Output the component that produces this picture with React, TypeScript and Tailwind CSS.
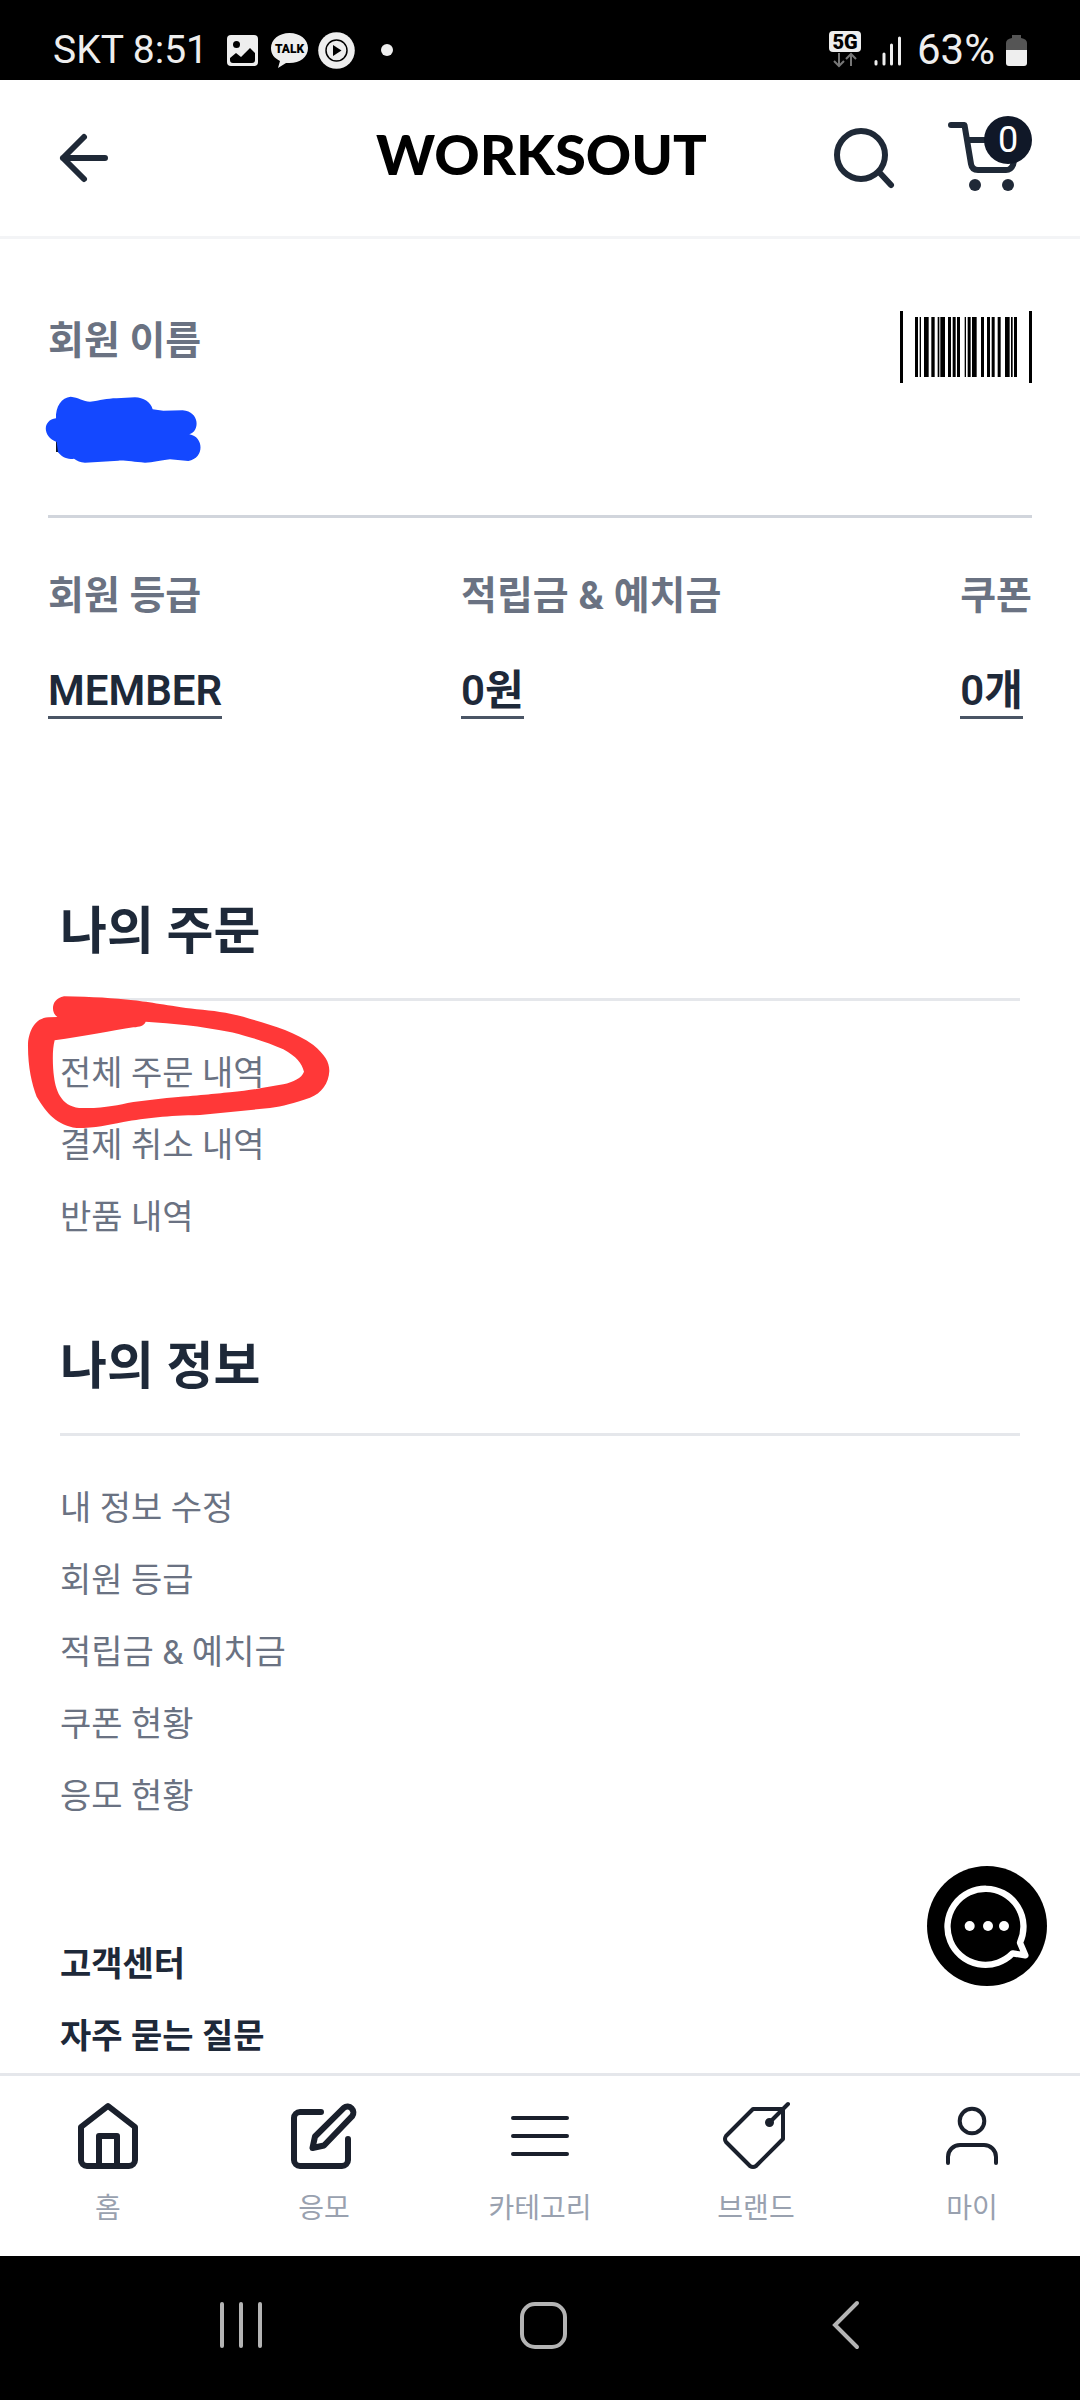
import type { ReactNode } from "react";

const bars: [number, number][] = [
  [165, 9], [179, 4], [192, 14], [214, 10], [233, 5], [241, 14], [264, 9], [278, 9], [291, 9], [314, 4],
  [323, 9], [336, 14], [363, 9], [381, 9], [395, 9], [413, 9], [435, 14], [453, 5], [462, 9],
];

function StatusBar() {
  return (
    <div className="flex h-20 items-center justify-between bg-black px-[53px] pt-5 text-[#eeeeee]">
      <div className="flex items-center">
        <span className="w-[174px] text-[39px] leading-[60px]">SKT 8:51</span>
        <svg className="h-[38px] w-[170px]" viewBox="227 31 170 38" aria-hidden="true">
          <rect x="227" y="35" width="31" height="31" rx="4" fill="#eeeeee" />
          <circle cx="236.500" cy="44.500" r="3.500" fill="#000" />
          <path d="M230 60V58L236 53L241 57L250 48L255 53V60Q255 63 252 63H233Q230 63 230 60Z" fill="#000" />
          <path d="M289.500 33C300 33 308 39.500 308 48C308 57 300 63 289.500 63L286 63L278 68L280 61C274 58 271 54 271 48C271 39.500 279 33 289.500 33Z" fill="#eeeeee" />
          <text x="289.500" y="53" textAnchor="middle" fontFamily="Roboto, sans-serif" fontSize="12" fontWeight="900" fill="#000">TALK</text>
          <circle cx="336.500" cy="50.500" r="18.300" fill="#eeeeee" />
          <circle cx="336.500" cy="50.500" r="10.500" fill="none" stroke="#000" strokeWidth="1.500" />
          <path d="M333 45L341.500 50.500L333 56Z" fill="#000" />
          <circle cx="387" cy="50" r="6" fill="#eeeeee" />
        </svg>
      </div>
      <div className="flex items-center">
        <svg className="h-10 w-[76px]" viewBox="829 29 76 40" aria-hidden="true">
          <rect x="829" y="30" width="32" height="21" rx="4" fill="#eeeeee" />
          <text x="845" y="48" textAnchor="middle" fontFamily="Roboto, sans-serif" fontSize="20" fontWeight="900" fill="#000">5G</text>
          <path d="M839 52V65M834 60L839 65L844 60M851 65V53M846 58L851 53L856 58" fill="none" stroke="#777" strokeWidth="2" />
          <path d="M876 60.500V63M884 53V63M891.500 44V63M899.500 37V63" stroke="#eeeeee" strokeWidth="3" strokeLinecap="round" />
        </svg>
        <span className="ml-3 w-[86px] text-[42px] leading-[60px]">63%</span>
        <svg className="ml-[3px] h-10 w-[21px]" viewBox="1006 29 21 40" aria-hidden="true">
          <path d="M1012 37V34H1021V37Q1027 38 1027 42V50H1006V42Q1006 38 1012 37Z" fill="#555" />
          <path d="M1006 49H1027V62Q1027 65 1024 65H1009Q1006 65 1006 62Z" fill="#eeeeee" />
        </svg>
      </div>
    </div>
  );
}

function Header() {
  return (
    <header className="grid grid-cols-3 items-center border-b-[3px] border-gray-100 px-12 py-9">
      <button type="button" aria-label="뒤로" className="w-[72px]">
        <svg className="h-[72px] w-[72px]" viewBox="0 0 72 72" fill="none" stroke="#1f2937" strokeWidth="6" strokeLinecap="round" strokeLinejoin="round">
          <path d="M57 36H15M36 15L15 36L36 57" />
        </svg>
      </button>
      <a href="#home" className="pb-2 text-center font-['Lato'] text-[56px] leading-[72px] font-black text-black">WORKSOUT</a>
      <div className="flex items-center justify-end gap-9">
        <button type="button" aria-label="검색">
          <svg className="h-[84px] w-[84px]" viewBox="822 116 84 84" fill="none" stroke="#1f2937" strokeWidth="6" strokeLinecap="round">
            <circle cx="861" cy="155" r="24" />
            <path d="M879 172L891 185" />
          </svg>
        </button>
        <button type="button" aria-label="장바구니" className="relative">
          <svg className="h-[84px] w-[90px]" viewBox="942 116 90 84" fill="none" stroke="#1f2937" strokeWidth="6" strokeLinecap="round" strokeLinejoin="round">
            <path d="M951 125H964.500L971 164Q972 170 978 170H1006Q1011 170 1013 165L1019 140H968" />
            <circle cx="975" cy="185" r="6" fill="#1f2937" stroke="none" />
            <circle cx="1008" cy="185" r="6" fill="#1f2937" stroke="none" />
          </svg>
          <span className="absolute top-0 right-0 flex h-12 w-12 items-center justify-center rounded-full bg-gray-900 text-[36px] leading-none text-white">0</span>
        </button>
      </div>
    </header>
  );
}

function Stat({ label, value }: { label: string; value: string }) {
  return (
    <div className="flex flex-col items-start gap-10">
      <dt className="text-[39px] leading-[60px] font-bold text-gray-500">{label}</dt>
      <dd className="flex">
        <a href="#detail" className="border-b-[3px] border-gray-600 text-[42px] leading-[50px] font-semibold text-gray-800">
          {value}
        </a>
      </dd>
    </div>
  );
}

function Profile() {
  return (
    <section className="px-12 pt-[72px]">
      <div className="flex items-start justify-between border-b-[3px] border-gray-300 pb-12">
        <div className="flex flex-col gap-6">
          <h2 className="text-[39px] leading-[60px] font-bold text-gray-500">회원 이름</h2>
          <svg className="h-[72px] w-[156px]" viewBox="144 315 468 216" overflow="visible" role="img" aria-label="가려진 이름">
            <rect x="168" y="450" width="8" height="36" fill="#111827" />
            <path
              d="M168 385C166 350 185 322 212 320C235 322 250 334 270 335C300 332 320 325 350 325L405 322C430 323 452 335 458 358L490 362L548 361C600 365 600 425 568 433C612 440 615 505 565 513L510 508C480 511 460 518 435 518C400 516 380 511 355 512L255 518C240 517 232 512 222 506C200 510 185 500 174 487L170 456C127 440 127 390 168 385Z"
              fill="#1448ff"
            />
          </svg>
        </div>
        <button type="button" aria-label="회원 바코드" className="border-x-[3px] border-black">
          <svg className="h-[72px] w-[126px]" viewBox="129 63 378 216" fill="#000">
            {bars.map(([x, w]) => (
              <rect key={x} x={x} y="81" width={w} height="180" />
            ))}
          </svg>
        </button>
      </div>
      <dl className="flex justify-between pt-12">
        <Stat label="회원 등급" value="MEMBER" />
        <Stat label="적립금 & 예치금" value="0원" />
        <Stat label="쿠폰" value="0개" />
      </dl>
    </section>
  );
}

function MenuSection({ title, items, children }: { title: string; items: string[]; children?: ReactNode }) {
  return (
    <section>
      <h2 className="border-b-[3px] border-gray-200 pb-[30px] text-[51px] leading-[72px] font-bold text-gray-800">{title}</h2>
      <ul className="relative mt-9 text-[34px] leading-[72px] text-gray-500">
        {items.map((item) => (
          <li key={item}>
            <a href="#menu">{item}</a>
          </li>
        ))}
        {children}
      </ul>
    </section>
  );
}

function RedMarker() {
  return (
    <li className="pointer-events-none absolute -top-11 -left-[37px]" aria-hidden="true">
      <svg className="h-[137px] w-[310px]" viewBox="69 369 930 411">
        <path
          fillRule="evenodd"
          fill="#ff3838"
          d="M192 379C280 380 340 385 400 391C450 396 500 407 590 418C640 422 680 428 730 440C800 462 880 480 940 525C975 555 988 575 988 603C986 640 965 670 930 683C880 700 850 708 810 714L600 735C500 737 440 744 370 756C320 766 290 774 230 774C170 765 140 730 110 680C95 640 83 590 84 520C88 480 105 445 145 442L172 441C150 425 155 385 192 379ZM164 511C156 540 158 590 162 620C168 670 190 715 250 714C320 715 350 705 400 696L500 684C600 676 640 672 690 667C760 660 800 652 850 643C880 635 905 625 912 605C905 580 890 560 850 538C800 515 730 495 690 486C600 468 520 460 437 455C432 468 420 470 400 472C340 482 250 499 164 511Z"
        />
      </svg>
    </li>
  );
}

const tabs: { label: string; width: number; icon: ReactNode }[] = [
  {
    label: "홈",
    width: 6,
    icon: <path d="M36 6L9 27V60A6 6 0 0 0 15 66H57A6 6 0 0 0 63 60V27ZM27 66V36H45V66" />,
  },
  {
    label: "응모",
    width: 6,
    icon: <path d="M33 12H12A6 6 0 0 0 6 18V60A6 6 0 0 0 12 66H54A6 6 0 0 0 60 60V39M27 36.500L55.800 7.800A6 6 0 0 1 64.200 16.200L36 45.500L24.500 48Z" />,
  },
  { label: "카테고리", width: 4, icon: <path d="M9 18H63M9 36H63M9 54H63" /> },
  {
    label: "브랜드",
    width: 4,
    icon: (
      <>
        <path d="M33 9H63V39L36 66Q33 68 30 66L6 42Q4 39 6 36ZM49.500 22.500L68 4" />
        <circle cx="49.500" cy="22.500" r="2.500" />
      </>
    ),
  },
  {
    label: "마이",
    width: 4,
    icon: (
      <>
        <circle cx="36" cy="21" r="12.300" />
        <path d="M12 63V57A12 12 0 0 1 24 45H48A12 12 0 0 1 60 57V63" />
      </>
    ),
  },
];

function TabBar() {
  return (
    <nav className="relative grid grid-cols-5 border-t-[3px] border-gray-200 bg-white pt-6 pb-[26px]">
      {tabs.map((tab) => (
        <a key={tab.label} href="#tab" className="flex flex-col items-center gap-4 text-[28px] leading-[42px] text-gray-400">
          <svg className="h-[72px] w-[72px]" viewBox="0 0 72 72" fill="none" stroke="#1a202c" strokeWidth={tab.width} strokeLinecap="round" strokeLinejoin="round">
            {tab.icon}
          </svg>
          {tab.label}
        </a>
      ))}
      <button type="button" aria-label="채팅 상담" className="absolute right-[33px] bottom-full mb-[90px]">
        <svg className="h-[120px] w-[120px]" viewBox="0 0 360 360">
          <circle cx="180" cy="180" r="180" fill="#000" />
          <path d="M257 262A114 114 0 1 1 279 230L295 268Z" fill="none" stroke="#fff" strokeWidth="19" strokeLinejoin="round" />
          <circle cx="128" cy="180" r="15" fill="#fff" />
          <circle cx="183" cy="180" r="15" fill="#fff" />
          <circle cx="231" cy="180" r="15" fill="#fff" />
        </svg>
      </button>
    </nav>
  );
}

function SystemBar() {
  return (
    <div className="flex items-center justify-between bg-black px-[205px] pt-[33px] pb-[39px]">
      <button type="button" aria-label="최근 앱">
        <svg className="h-[72px] w-[72px]" viewBox="0 0 72 72" stroke="#b4b4b4" strokeWidth="4" strokeLinecap="round">
          <path d="M17 15V57M36 15V57M55 15V57" />
        </svg>
      </button>
      <button type="button" aria-label="홈 화면">
        <svg className="h-[72px] w-[72px]" viewBox="0 0 72 72" fill="none" stroke="#b4b4b4" strokeWidth="4">
          <rect x="18" y="15" width="43" height="43" rx="13" />
        </svg>
      </button>
      <button type="button" aria-label="이전 화면">
        <svg className="h-[72px] w-[72px]" viewBox="0 0 72 72" fill="none" stroke="#b4b4b4" strokeWidth="4" strokeLinecap="round">
          <path d="M54 14L32 36L54 58" />
        </svg>
      </button>
    </div>
  );
}

export default function App() {
  return (
    <div lang="ko" className="flex min-h-screen flex-col bg-white font-[Roboto,'Noto_Sans_CJK_KR',sans-serif]">
      <StatusBar />
      <Header />
      <main className="flex-1">
        <Profile />
        <div className="flex flex-col px-[60px] pt-[177px]">
          <div className="flex flex-col gap-[78px]">
            <MenuSection title="나의 주문" items={["전체 주문 내역", "결제 취소 내역", "반품 내역"]}>
              <RedMarker />
            </MenuSection>
            <MenuSection title="나의 정보" items={["내 정보 수정", "회원 등급", "적립금 & 예치금", "쿠폰 현황", "응모 현황"]} />
          </div>
          <ul className="mt-24 text-[34px] leading-[72px] font-bold text-gray-800">
            <li><a href="#center">고객센터</a></li>
            <li><a href="#faq">자주 묻는 질문</a></li>
          </ul>
        </div>
      </main>
      <div className="sticky bottom-0">
        <TabBar />
        <SystemBar />
      </div>
    </div>
  );
}
